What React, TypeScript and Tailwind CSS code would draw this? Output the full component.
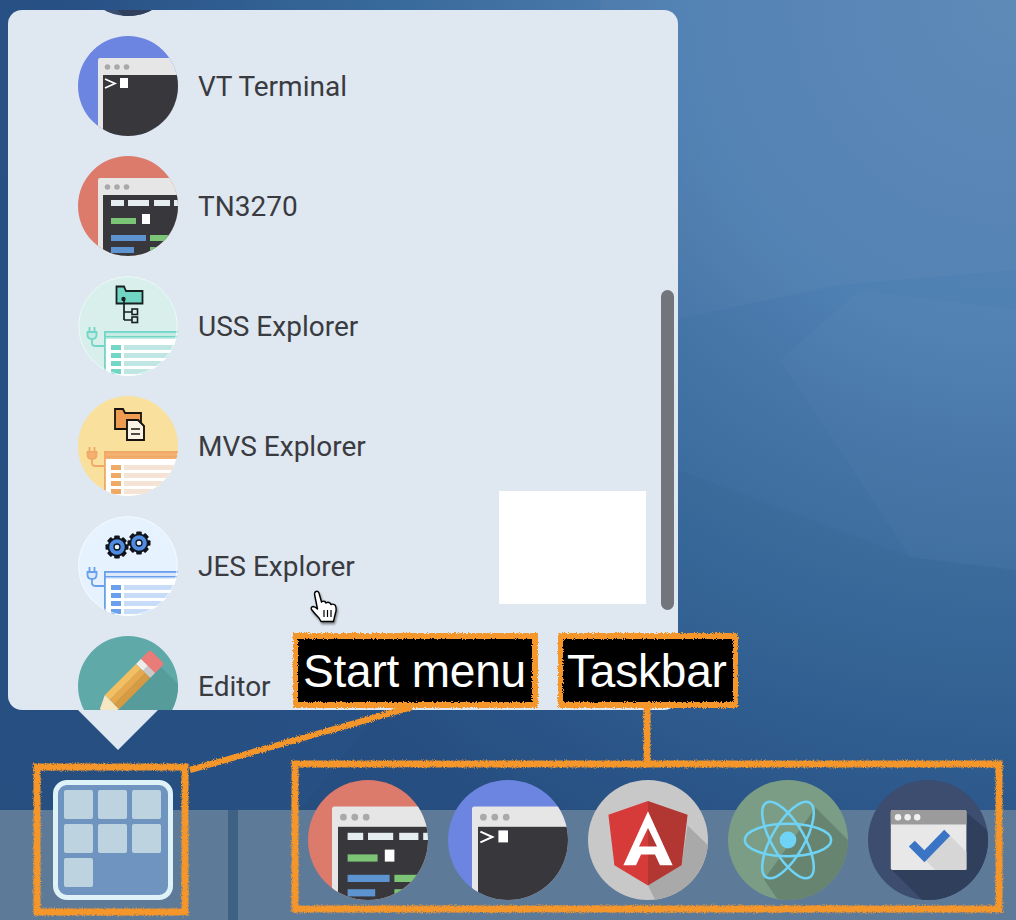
import React from "react";

// ---- app icons, all drawn on a 100x100 canvas and clipped by a round wrapper

function TermWindow({ children }: { children?: React.ReactNode }) {
  return (
    <>
      <rect x="20" y="22" width="90" height="90" rx="2" fill="#e6e6e6" />
      <rect x="25" y="39" width="85" height="70" fill="#38383c" />
      <circle cx="29.5" cy="31" r="2.8" fill="#a9a9a9" />
      <circle cx="39" cy="31" r="2.8" fill="#a9a9a9" />
      <circle cx="48.5" cy="31" r="2.8" fill="#a9a9a9" />
      {children}
    </>
  );
}

function VtIcon() {
  return (
    <>
      <rect width="100" height="100" fill="#6b85e0" />
      <TermWindow>
        <path d="M27 43 L37 47.5 L27 52" fill="none" stroke="#fff" strokeWidth="1.7" />
        <rect x="42" y="42" width="8" height="10" fill="#fff" />
      </TermWindow>
    </>
  );
}

function TnIcon() {
  return (
    <>
      <rect width="100" height="100" fill="#dc7a6c" />
      <TermWindow>
        <rect x="33" y="44" width="13" height="6" fill="#e6edf0" />
        <rect x="50" y="44" width="21" height="6" fill="#e6edf0" />
        <rect x="76" y="44" width="16" height="6" fill="#e6edf0" />
        <rect x="96" y="44" width="8" height="6" fill="#e6edf0" />
        <rect x="33" y="62" width="25" height="6" fill="#7cc576" />
        <rect x="64" y="58" width="8" height="10" fill="#fff" />
        <rect x="33" y="79" width="35" height="6" fill="#5d94d0" />
        <rect x="72" y="79" width="24" height="6" fill="#7cc576" />
        <rect x="33" y="91" width="23" height="6" fill="#5d94d0" />
        <rect x="72" y="91" width="20" height="6" fill="#7cc576" />
      </TermWindow>
    </>
  );
}

function ExplorerTable({ main, light, band }: { main: string; light: string; band: string }) {
  const rows = [69, 77, 85, 93];
  return (
    <>
      <rect x="26" y="55" width="80" height="50" fill="#fff" />
      <rect x="26" y="55" width="80" height="8" fill={band} />
      <rect x="26" y="55" width="80" height="1.8" fill={main} />
      <rect x="26" y="55" width="1.8" height="50" fill={main} />
      <rect x="26" y="60" width="80" height="1.4" fill={main} />
      {rows.map((y) => (
        <g key={y}>
          <rect x="33" y={y} width="10" height="5" fill={main} />
          <rect x="46" y={y} width="60" height="5" fill={light} />
        </g>
      ))}
      <path d="M14 63 V67 Q14 70 18 70 H26" fill="none" stroke={main} strokeWidth="1.8" />
      <path d="M9.5 56 H18.5 V59 Q18.5 63 14 63 Q9.5 63 9.5 59 Z" fill={band} stroke={main} strokeWidth="1.8" />
      <path d="M11.5 51 V56 M16.5 51 V56" stroke={main} strokeWidth="1.8" />
    </>
  );
}

function UssIcon() {
  return (
    <>
      <rect width="100" height="100" fill="#d9efec" />
      <ExplorerTable main="#72d6c6" light="#bfe6e2" band="#c6ebe5" />
      <path d="M38.5 10.5 H46 L48 15 H64.5 V27.5 H38.5 Z" fill="#71d5c3" stroke="#17201f" strokeWidth="1.8" />
      <path d="M46 23 V44 M46 36 H54 M46 44 H54" fill="none" stroke="#17201f" strokeWidth="1.7" />
      <circle cx="45.5" cy="23" r="2.2" fill="#17201f" />
      <rect x="54" y="33" width="5.5" height="5.5" fill="#d9efec" stroke="#17201f" strokeWidth="1.6" />
      <rect x="54" y="41" width="5.5" height="5.5" fill="#d9efec" stroke="#17201f" strokeWidth="1.6" />
      <circle cx="50" cy="50" r="49.3" fill="none" stroke="#f2fafa" strokeWidth="0.8" />
    </>
  );
}

function MvsIcon() {
  return (
    <>
      <rect width="100" height="100" fill="#f9e09c" />
      <ExplorerTable main="#f0a866" light="#f5e4d6" band="#f3b070" />
      <path d="M37 13 H45 L47 17 H63 V33 H37 Z" fill="#ee9c52" stroke="#17140f" strokeWidth="1.8" />
      <path d="M49 24 H60 L66 30 V44 H49 Z" fill="#fbf4e4" stroke="#17140f" strokeWidth="1.9" />
      <path d="M53 33 H62 M53 38 H62" stroke="#17140f" strokeWidth="1.7" />
    </>
  );
}

function Gear({ cx, cy }: { cx: number; cy: number }) {
  const teeth = [0, 45, 90, 135];
  return (
    <g>
      {teeth.map((a) => (
        <rect
          key={a}
          x={cx - 2.8}
          y={cy - 11.5}
          width="5.6"
          height="23"
          rx="1"
          fill="#10131a"
          transform={`rotate(${a} ${cx} ${cy})`}
        />
      ))}
      <circle cx={cx} cy={cy} r="8.6" fill="#4f8be0" stroke="#10131a" strokeWidth="1.6" />
      <circle cx={cx} cy={cy} r="3" fill="#e8f3fd" stroke="#10131a" strokeWidth="1.3" />
    </g>
  );
}

function JesIcon() {
  return (
    <>
      <rect width="100" height="100" fill="#e6f2fd" />
      <ExplorerTable main="#69a0ec" light="#c6dcf8" band="#dbe9fb" />
      <Gear cx={39} cy={31} />
      <Gear cx={61} cy={27} />
      <circle cx="50" cy="50" r="49.3" fill="none" stroke="#f6fbff" strokeWidth="0.8" />
    </>
  );
}

function EditorIcon() {
  return (
    <>
      <rect width="100" height="100" fill="#5fa9a8" />
      <polygon points="82,30 112,60 112,112 50,112 20,82" fill="#559c9b" />
      <g transform="translate(70 30) rotate(45)">
        <rect x="-10" y="-13" width="20" height="16" rx="3" fill="#e97b78" />
        <rect x="-10" y="0" width="10" height="7" fill="#ececec" />
        <rect x="0" y="0" width="10" height="7" fill="#c9c9c9" />
        <rect x="-10" y="7" width="7" height="44" fill="#f2bf62" />
        <rect x="-3" y="7" width="6" height="44" fill="#e7a94c" />
        <rect x="3" y="7" width="7" height="44" fill="#d69a42" />
        <polygon points="-10,51 10,51 0,72" fill="#f6e7c2" />
        <polygon points="-3.5,64.5 3.5,64.5 0,72" fill="#38383c" />
      </g>
    </>
  );
}

function AngularIcon() {
  return (
    <>
      <rect width="100" height="100" fill="#c8c8c8" />
      <polygon points="83,38 112,66 112,112 62,112 50,88 78,71" fill="#a9a9a9" />
      <polygon points="50,17.5 17,29 22,71 50,88" fill="#d63b39" />
      <polygon points="50,17.5 83,29 78,71 50,88" fill="#b23632" />
      <path
        d="M50 26 L70.5 71 H60 L55.8 62 H44.2 L40 71 H29.5 Z M50 40 L42.5 55.5 H57.5 Z"
        fill="#fff"
        fillRule="evenodd"
      />
    </>
  );
}

function ReactIcon() {
  return (
    <>
      <rect width="100" height="100" fill="#7b9d86" />
      <polygon points="73,23 112,62 112,112 50,112 30,83" fill="#66846f" />
      <g fill="none" stroke="#6fd3f5" strokeWidth="2.1">
        <ellipse cx="50" cy="50" rx="36" ry="13.5" />
        <ellipse cx="50" cy="50" rx="36" ry="13.5" transform="rotate(60 50 50)" />
        <ellipse cx="50" cy="50" rx="36" ry="13.5" transform="rotate(120 50 50)" />
      </g>
      <circle cx="50" cy="50" r="7" fill="#6fd3f5" />
    </>
  );
}

function TaskIcon() {
  return (
    <>
      <rect width="100" height="100" fill="#3c4d70" />
      <polygon points="20,75 60,115 115,115 115,55 82,27" fill="#2f3f5c" />
      <rect x="19" y="25" width="63" height="50" rx="1.5" fill="#e8e8e8" />
      <path d="M19 37 V26.5 Q19 25 20.5 25 H80.5 Q82 25 82 26.5 V37 Z" fill="#9b9b9b" />
      <polygon points="47,66 68,46 82,60 82,75 56,75" fill="#d6d6d6" />
      <circle cx="25" cy="31" r="2.7" fill="#f0f0f0" />
      <circle cx="33" cy="31" r="2.7" fill="#f0f0f0" />
      <circle cx="41" cy="31" r="2.7" fill="#f0f0f0" />
      <path d="M36.5 53 L47 63.5 L66 44" fill="none" stroke="#3a74c4" strokeWidth="7" />
    </>
  );
}

function RoundIcon({ className, children }: { className: string; children: React.ReactNode }) {
  return (
    <div className={`${className} shrink-0 overflow-hidden rounded-full`}>
      <svg viewBox="0 0 100 100" className="block h-full w-full">
        {children}
      </svg>
    </div>
  );
}

const menuItems = [
  { label: "", icon: <TaskIcon /> },
  { label: "VT Terminal", icon: <VtIcon /> },
  { label: "TN3270", icon: <TnIcon /> },
  { label: "USS Explorer", icon: <UssIcon /> },
  { label: "MVS Explorer", icon: <MvsIcon /> },
  { label: "JES Explorer", icon: <JesIcon /> },
  { label: "Editor", icon: <EditorIcon /> },
];

const taskbarItems = [
  { id: "tn3270", icon: <TnIcon /> },
  { id: "vt", icon: <VtIcon /> },
  { id: "angular", icon: <AngularIcon /> },
  { id: "react", icon: <ReactIcon /> },
  { id: "task", icon: <TaskIcon /> },
];

function StartMenu() {
  return (
    <div className="relative h-[700px] w-[670px]">
      <div className="h-full overflow-hidden rounded-[14px] bg-[#dfe7f1]">
        <div className="-mt-[94px] flex flex-col gap-5 pl-[70px]">
          {menuItems.map((item) => (
            <div key={item.label || "top"} className="flex items-center gap-5">
              <RoundIcon className="h-[100px] w-[100px]">{item.icon}</RoundIcon>
              <span className="pt-[2px] text-[28px] leading-8 text-[#3a3b40] [font-family:Roboto,sans-serif]">
                {item.label}
              </span>
            </div>
          ))}
        </div>
      </div>
      {/* scrollbar thumb */}
      <div className="absolute left-[653px] top-[280px] h-[320px] w-[13px] rounded-full bg-[#72757c]" />
      {/* blanked out area */}
      <div className="absolute left-[491px] top-[481px] h-[113px] w-[147px] bg-white" />
      {/* arrow pointing at the start button */}
      <div className="absolute left-[70px] top-[700px] h-10 w-20 bg-[#dfe7f1] [clip-path:polygon(0_0,100%_0,50%_100%)]" />
    </div>
  );
}

function Taskbar() {
  const tiles = [1, 2, 3, 4, 5, 6, 7];
  return (
    <div className="flex h-[110px] shrink-0 bg-[#5e7a99]">
      <button className="-mt-[30px] ml-[53px] grid h-[120px] w-[120px] grid-cols-[repeat(3,29px)] content-start gap-[5px] rounded-[14px] border-[5px] border-[#dff2f7] bg-[#7094c0] pl-[6px] pt-[5px]">
        {tiles.map((t) => (
          <div key={t} className="h-[29px] w-[29px] rounded-[2px] bg-[#bdd4e0]" />
        ))}
      </button>
      <div className="ml-[55px] h-full w-[10px] bg-[#3f6284]" />
      <div className="-mt-[30px] ml-[70px] flex gap-5">
        {taskbarItems.map((item) => (
          <RoundIcon key={item.id} className="h-[120px] w-[120px]">
            {item.icon}
          </RoundIcon>
        ))}
      </div>
    </div>
  );
}

function Wallpaper() {
  return (
    <svg viewBox="0 0 1016 920" className="absolute inset-0 h-full w-full">
      <polygon points="600,0 1016,0 1016,270 840,285 600,335" fill="#ffffff" opacity="0.025" />
      <polygon points="780,360 910,557 1016,570 1016,310 860,290" fill="#ffffff" opacity="0.02" />
      <polygon points="600,440 910,557 1016,570 1016,810 300,810" fill="#000000" opacity="0.025" />
    </svg>
  );
}

function HandCursor() {
  return (
    <svg viewBox="0 0 28 33" className="absolute left-[310px] top-[590px] h-[33px] w-[28px] drop-shadow-[1px_2px_1px_rgba(0,0,0,0.45)]">
      <path
        d="M6 1.5 Q8 0.8 9 3 L11.5 12 Q13 10.5 15 11.5 L16 13 Q18 11.5 20 13 L21 14.5 Q23 13.5 25 15 Q26.5 17 26 21 L24.5 27 L23.5 31.5 H11 L9 28 Q5 24 1.5 19.5 Q0.5 17 3 16.5 Q5 16.5 7.5 19 L4.5 4 Q4.5 2 6 1.5 Z"
        fill="#fff"
        stroke="#000"
        strokeWidth="1.4"
        strokeLinejoin="round"
      />
      <path d="M14 20 V27 M17.5 20 V27 M21 20 V27" stroke="#000" strokeWidth="1.2" />
    </svg>
  );
}

// hand drawn orange marks from the annotated screenshot
function Annotations() {
  return (
    <svg viewBox="0 0 1016 920" className="absolute inset-0 h-full w-full">
      <defs>
        <filter id="rough" filterUnits="userSpaceOnUse" x="0" y="0" width="1016" height="920">
          <feTurbulence type="fractalNoise" baseFrequency="0.9" numOctaves="2" seed="4" />
          <feDisplacementMap in="SourceGraphic" scale="4" />
        </filter>
      </defs>
      <g filter="url(#rough)">
        <g fill="none" stroke="#f5962b" strokeWidth="7">
          <rect x="37" y="767" width="148" height="145" />
          <rect x="295" y="764" width="704" height="145" />
          <path d="M190 770 L412 707" strokeWidth="6" />
          <path d="M647 708 V764" />
        </g>
        <rect x="293" y="633" width="245" height="75" fill="#f5962b" />
        <rect x="558" y="633" width="180" height="75" fill="#f5962b" />
        <rect x="298" y="639" width="234" height="63" fill="#000" />
        <rect x="563" y="639" width="170" height="63" fill="#000" />
      </g>
    </svg>
  );
}

function Callout({ text, className }: { text: string; className: string }) {
  return (
    <div className={`${className} absolute top-[640px] flex h-[61px] items-center text-[46px] leading-none tracking-[-0.2px] text-white [font-family:'Liberation_Sans',Arial,sans-serif]`}>
      {text}
    </div>
  );
}

export default function App() {
  return (
    <div className="relative flex h-[920px] w-[1016px] flex-col overflow-hidden bg-[radial-gradient(circle_1364px_at_100%_0%,#5b88b6_0px,#4f80b3_336px,#4675a8_450px,#38699b_640px,#2f5c90_800px,#275085_956px,#264e7e_1364px)]">
      <Wallpaper />
      <div className="relative flex-1 pl-2 pt-2.5">
        <StartMenu />
      </div>
      <div className="relative">
        <Taskbar />
      </div>
      <Annotations />
      <Callout text="Start menu" className="left-[303px]" />
      <Callout text="Taskbar" className="left-[567px]" />
      <HandCursor />
    </div>
  );
}
